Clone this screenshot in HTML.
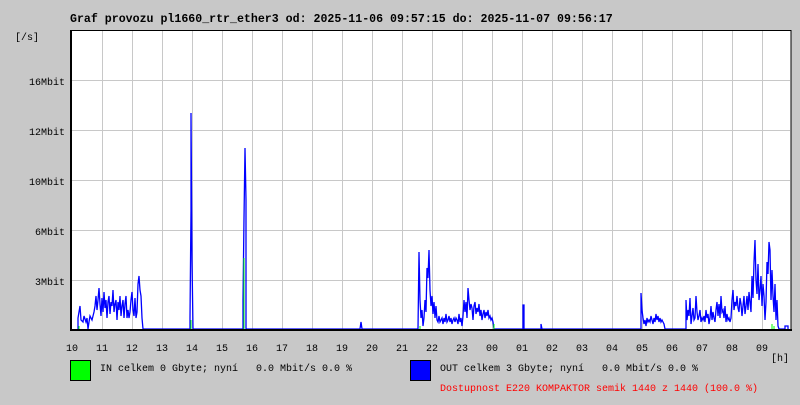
<!DOCTYPE html>
<html><head><meta charset="utf-8"><style>
body{margin:0;width:800px;height:400px;background:#c8c8c8;overflow:hidden;font-family:"Liberation Mono","DejaVu Sans Mono",monospace;}
svg text{font-family:"Liberation Mono","DejaVu Sans Mono",monospace;font-size:10px;white-space:pre;}
</style></head><body>
<svg width="800" height="400" xmlns="http://www.w3.org/2000/svg" xml:space="preserve">
<rect x="0" y="0" width="800" height="400" fill="#c8c8c8"/>
<text x="70" y="22" font-weight="bold" style="font-size:11.6px">Graf provozu pl1660_rtr_ether3 od: 2025-11-06 09:57:15 do: 2025-11-07 09:56:17</text>
<rect x="71" y="30.5" width="720" height="299" fill="#fff" stroke="#000" stroke-width="1"/>
<g stroke="#c8c8c8" stroke-width="1">
<line x1="102.5" y1="31" x2="102.5" y2="329"/><line x1="132.5" y1="31" x2="132.5" y2="329"/><line x1="162.5" y1="31" x2="162.5" y2="329"/><line x1="192.5" y1="31" x2="192.5" y2="329"/><line x1="222.5" y1="31" x2="222.5" y2="329"/><line x1="252.5" y1="31" x2="252.5" y2="329"/><line x1="282.5" y1="31" x2="282.5" y2="329"/><line x1="312.5" y1="31" x2="312.5" y2="329"/><line x1="342.5" y1="31" x2="342.5" y2="329"/><line x1="372.5" y1="31" x2="372.5" y2="329"/><line x1="402.5" y1="31" x2="402.5" y2="329"/><line x1="432.5" y1="31" x2="432.5" y2="329"/><line x1="462.5" y1="31" x2="462.5" y2="329"/><line x1="492.5" y1="31" x2="492.5" y2="329"/><line x1="522.5" y1="31" x2="522.5" y2="329"/><line x1="552.5" y1="31" x2="552.5" y2="329"/><line x1="582.5" y1="31" x2="582.5" y2="329"/><line x1="612.5" y1="31" x2="612.5" y2="329"/><line x1="642.5" y1="31" x2="642.5" y2="329"/><line x1="672.5" y1="31" x2="672.5" y2="329"/><line x1="702.5" y1="31" x2="702.5" y2="329"/><line x1="732.5" y1="31" x2="732.5" y2="329"/><line x1="762.5" y1="31" x2="762.5" y2="329"/>
<line x1="72" y1="80.5" x2="790" y2="80.5"/><line x1="72" y1="130.5" x2="790" y2="130.5"/><line x1="72" y1="180.5" x2="790" y2="180.5"/><line x1="72" y1="230.5" x2="790" y2="230.5"/><line x1="72" y1="280.5" x2="790" y2="280.5"/>
</g>
<polyline fill="none" stroke="#0000ff" stroke-width="1.3" points="78,329 78,318 80,306 81,320 83,322 84,316 86,322 87,318 88,329 89,322 90,316 92,320 94,312 95,306 96,296 97,310 98,300 99,288 100,304 101,316 102,298 103,312 104,292 105,308 106,300 107,318 108,302 109,296 110,314 111,302 112,306 113,290 114,312 115,304 116,300 117,320 118,302 119,310 120,296 121,316 122,306 123,300 124,318 125,304 126,296 127,318 128,310 129,318 130,312 131,300 132,292 133,310 134,316 135,298 136,318 137,312 138,284 139,276 140,290 141,296 142,318 143,329 190,329 190,318 191,210 191,113 192,260 193,329 243,329 243,300 244,218 245,148 246,200 246,329 360,329 361,322 362,329 418,329 419,252 420,300 421,318 422,310 423,326 424,318 425,300 426,312 427,268 428,278 429,250 430,290 431,306 432,296 433,314 434,302 435,318 436,306 437,320 438,322 439,316 440,322 441,320 442,318 443,324 444,318 445,322 446,314 447,322 448,320 449,316 450,322 451,318 452,324 453,320 454,318 455,322 456,318 457,320 458,324 459,314 460,322 461,318 462,326 463,316 464,300 465,312 466,302 467,318 468,288 469,300 470,310 471,304 472,308 473,320 474,306 475,302 476,314 477,308 478,312 479,304 480,316 481,310 482,320 483,314 484,310 485,318 486,312 487,316 488,310 489,318 490,316 491,320 492,318 493,322 494,329 523,329 523,305 524,305 524,329 541,329 541,324 542,329 641,329 641,293 642,310 643,318 644,324 645,320 646,326 647,318 648,322 649,320 650,322 651,316 652,320 653,324 654,318 655,322 656,314 657,320 658,316 659,322 660,318 661,322 662,320 663,322 664,324 665,329 686,329 686,300 687,320 688,310 689,316 690,298 691,324 692,316 693,308 694,320 695,318 696,296 697,312 698,320 699,316 700,310 701,322 702,318 703,320 704,316 705,322 706,310 707,318 708,314 709,324 710,318 711,306 712,320 713,312 714,318 715,322 716,310 717,302 718,316 719,304 720,318 721,296 722,312 723,310 724,318 725,306 726,322 727,314 728,320 729,318 730,322 731,318 732,300 733,290 734,310 735,302 736,306 737,296 738,308 739,312 740,298 741,304 742,316 743,306 744,296 745,314 746,306 747,296 748,310 749,292 750,302 751,312 752,276 753,298 754,262 755,240 756,280 757,294 758,264 759,300 760,290 761,276 762,306 763,284 764,296 765,320 766,302 767,262 768,274 769,242 770,250 771,300 772,270 773,296 774,312 775,284 776,320 777,300 778,326 779,329 785,329 785,326 788,326 788,329"/>
<g stroke="#00ff00" stroke-width="1">
<line x1="79" y1="326" x2="79" y2="329"/><line x1="191" y1="320" x2="191" y2="329"/><line x1="244" y1="258" x2="244" y2="329"/><line x1="420" y1="326" x2="420" y2="329"/><line x1="494" y1="324" x2="494" y2="329"/><line x1="772" y1="324" x2="772" y2="329"/><line x1="774" y1="326" x2="774" y2="329"/>
</g>
<rect x="70" y="30" width="2" height="300" fill="#000"/>
<rect x="70" y="329" width="722" height="2" fill="#000"/>
<text x="15" y="40">[/s]</text>
<text x="65" y="85" text-anchor="end">16Mbit</text>
<text x="65" y="135" text-anchor="end">12Mbit</text>
<text x="65" y="185" text-anchor="end">10Mbit</text>
<text x="65" y="235" text-anchor="end">6Mbit</text>
<text x="65" y="285" text-anchor="end">3Mbit</text>
<g>
<text x="66" y="351">10</text><text x="96" y="351">11</text><text x="126" y="351">12</text><text x="156" y="351">13</text><text x="186" y="351">14</text><text x="216" y="351">15</text><text x="246" y="351">16</text><text x="276" y="351">17</text><text x="306" y="351">18</text><text x="336" y="351">19</text><text x="366" y="351">20</text><text x="396" y="351">21</text><text x="426" y="351">22</text><text x="456" y="351">23</text><text x="486" y="351">00</text><text x="516" y="351">01</text><text x="546" y="351">02</text><text x="576" y="351">03</text><text x="606" y="351">04</text><text x="636" y="351">05</text><text x="666" y="351">06</text><text x="696" y="351">07</text><text x="726" y="351">08</text><text x="756" y="351">09</text>
</g>
<text x="771" y="361">[h]</text>
<rect x="70.5" y="360.5" width="20" height="20" fill="#00ff00" stroke="#000"/>
<text x="100" y="371">IN celkem 0 Gbyte; nyní   0.0 Mbit/s 0.0 %</text>
<rect x="410.5" y="360.5" width="20" height="20" fill="#0000ff" stroke="#000"/>
<text x="440" y="371">OUT celkem 3 Gbyte; nyní   0.0 Mbit/s 0.0 %</text>
<text x="440" y="391" fill="#ff0000">Dostupnost E220 KOMPAKTOR semik 1440 z 1440 (100.0 %)</text>
</svg>
</body></html>
